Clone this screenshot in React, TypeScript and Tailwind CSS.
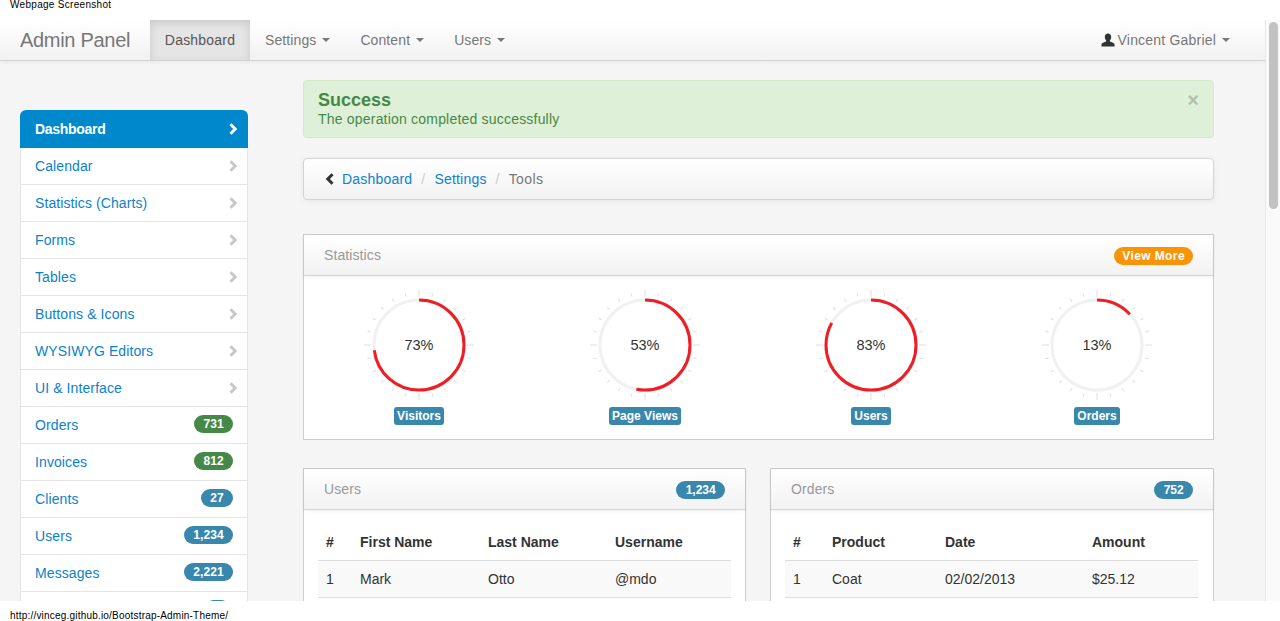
import React from "react";

const sideItems = [
  { label: "Calendar" },
  { label: "Statistics (Charts)" },
  { label: "Forms" },
  { label: "Tables" },
  { label: "Buttons & Icons" },
  { label: "WYSIWYG Editors" },
  { label: "UI & Interface" },
  { label: "Orders", badge: "731", green: true },
  { label: "Invoices", badge: "812", green: true },
  { label: "Clients", badge: "27" },
  { label: "Users", badge: "1,234" },
  { label: "Messages", badge: "2,221" },
];

const gauges = [
  { value: 73, label: "Visitors" },
  { value: 53, label: "Page Views" },
  { value: 83, label: "Users" },
  { value: 13, label: "Orders" },
];

const Caret = () => (
  <span className="ml-[6px] inline-block h-0 w-0 border-x-[4px] border-t-[4px] border-x-transparent border-t-[#777] align-middle" />
);

const Chevron = ({ color, left }: { color: string; left?: boolean }) => (
  <svg width="10" height="12" viewBox="0 0 10 12" className="shrink-0">
    <path
      d={left ? "M7.5 1.2 L2.8 6 L7.5 10.8" : "M2.5 1.2 L7.2 6 L2.5 10.8"}
      fill="none"
      stroke={color}
      strokeWidth="3"
    />
  </svg>
);

const Badge = ({ text, bg, margin }: { text: string; bg: string; margin: string }) => (
  <span
    className={`flex h-[18px] items-center rounded-[9px] px-[9.3px] text-[12px] font-bold text-white ${bg} ${margin}`}
  >
    {text}
  </span>
);

const Gauge = ({ value, label }: { value: number; label: string }) => {
  const r = 45;
  const c = 2 * Math.PI * r;
  const ticks = Array.from({ length: 24 }, (_, i) => i);
  return (
    <div className="flex flex-col items-center">
      <svg width="110" height="110" viewBox="0 0 110 110">
        {ticks.map((i) => (
          <line
            key={i}
            x1="55"
            y1={i % 6 === 0 ? 0 : 1.5}
            x2="55"
            y2={i % 6 === 0 ? 7 : 5}
            transform={`rotate(${i * 15} 55 55)`}
            stroke="#dedede"
            strokeWidth="1"
          />
        ))}
        <circle cx="55" cy="55" r={r} fill="none" stroke="#f1f1f1" strokeWidth="3" />
        <circle
          cx="55"
          cy="55"
          r={r}
          fill="none"
          stroke="#ef1e25"
          strokeWidth="3"
          strokeDasharray={`${(c * value) / 100} ${c}`}
          transform="rotate(-90 55 55)"
        />
        <text x="55" y="60" textAnchor="middle" fontSize="14.5" fill="#333">
          {value}%
        </text>
      </svg>
      <span className="mt-[7px] flex h-[18px] items-center rounded-[3px] bg-[#3a87ad] px-[3.5px] text-[12px] font-bold text-white">
        {label}
      </span>
    </div>
  );
};

const PanelHeader = ({ title, children }: { title: string; children: React.ReactNode }) => (
  <div className="flex h-[41px] items-center justify-between border-b border-[#d4d4d4] bg-gradient-to-b from-white to-[#f2f2f2] px-[20px] shadow-[0_1px_4px_rgba(0,0,0,0.065)]">
    <span className="text-[14px] tracking-[0.1px] text-[#999]">{title}</span>
    {children}
  </div>
);

const DataTable = ({
  widths,
  head,
  row,
}: {
  widths: string[];
  head: string[];
  row: string[];
}) => (
  <table className="mx-[14px] mt-[13px] table-fixed border-collapse text-[14px] text-[#333]">
    <colgroup>
      {widths.map((w, i) => (
        <col key={i} style={{ width: w }} />
      ))}
    </colgroup>
    <thead>
      <tr className="h-[37px] border-b border-[#ddd]">
        {head.map((h) => (
          <th key={h} className="px-[8px] pt-[2px] text-left font-bold">
            {h}
          </th>
        ))}
      </tr>
    </thead>
    <tbody>
      <tr className="h-[37px] border-b border-[#ddd] bg-[#f9f9f9]">
        {row.map((c) => (
          <td key={c} className="px-[8px] pt-[2px]">
            {c}
          </td>
        ))}
      </tr>
      <tr className="h-[37px]">
        {row.map((c) => (
          <td key={c} className="px-[8px]" />
        ))}
      </tr>
    </tbody>
  </table>
);

export default function App() {
  return (
    <div className="flex h-[621px] w-[1280px] flex-col overflow-hidden bg-white font-['Liberation_Sans',Arial,sans-serif] text-[14px]">
      <div className="h-[20px] shrink-0 pl-[10px] text-[10px] leading-[9px] tracking-[0.3px] text-black">
        Webpage Screenshot
      </div>

      <div className="flex h-[581px] shrink-0">
        <div className="flex w-[1265px] flex-col overflow-hidden bg-[#f5f5f5]">
          <nav className="flex h-[41px] shrink-0 items-center border-b border-[#d4d4d4] bg-gradient-to-b from-white to-[#f2f2f2] pl-[20px] pr-[35px] tracking-[0.1px] shadow-[0_1px_4px_rgba(0,0,0,0.065)]">
            <span className="w-[130px] text-[20px] tracking-[-0.3px] text-[#777]">Admin Panel</span>
            <span className="flex h-[40px] w-[100px] items-center justify-center bg-[#e5e5e5] tracking-[0.2px] text-[#555] shadow-[inset_0_3px_8px_rgba(0,0,0,0.125)]">
              Dashboard
            </span>
            <span className="flex h-[40px] items-center px-[15px] text-[#777]">
              Settings
              <Caret />
            </span>
            <span className="flex h-[40px] items-center px-[15px] text-[#777]">
              Content
              <Caret />
            </span>
            <span className="flex h-[40px] items-center px-[15px] text-[#777]">
              Users
              <Caret />
            </span>
            <span className="ml-auto flex items-center tracking-[0.2px] text-[#777]">
              <svg width="14" height="14" viewBox="0 0 14 14" className="mr-[3px]">
                <path
                  d="M7 .5c2 0 3.2 1.500 3.200 3.400 0 1.400-.6 2.700-1.300 3.400v1.300c1.500.6 4 1.300 4.600 2.400v2.500H.5V11c.6-1.100 3.100-1.800 4.600-2.400V7.300C4.400 6.600 3.800 5.300 3.800 3.900 3.800 2 5 .5 7 .5z"
                  fill="#333"
                />
              </svg>
              Vincent Gabriel
              <Caret />
            </span>
          </nav>

          <div className="flex min-h-0 grow pl-[20px]">
            <ul className="mt-[49px] w-[228px] shrink-0 self-start">
              <li className="flex h-[38px] items-center justify-between rounded-t-[6px] bg-[#0088cc] pl-[15px] pr-[10px] font-bold tracking-[-0.3px] text-white">
                Dashboard
                <Chevron color="#fff" />
              </li>
              {sideItems.map((item) => (
                <li
                  key={item.label}
                  className="flex h-[37px] items-center justify-between border-x border-b border-[#e5e5e5] bg-white px-[14px] tracking-[0.1px] text-[#0a82cc]"
                >
                  {item.label}
                  {item.badge ? (
                    <Badge
                      text={item.badge}
                      bg={item.green ? "bg-[#468847]" : "bg-[#3a87ad]"}
                      margin="-mt-[2px]"
                    />
                  ) : (
                    <span className="-mr-[5px]">
                      <Chevron color="#c8c8c8" />
                    </span>
                  )}
                </li>
              ))}
              <li className="flex h-[37px] items-center justify-end border-x border-b border-[#e5e5e5] bg-white px-[17px]">
                <span className="-mt-[2px] h-[18px] w-[25px] rounded-[9px] bg-[#3a87ad]" />
              </li>
            </ul>

            <main className="ml-[55px] w-[911px] shrink-0 pt-[19px]">
              <div className="flex h-[58px] justify-between rounded-[4px] border border-[#d6e9c6] bg-[#dff0d8] px-[14px] pt-[9px] text-[#468847]">
                <div>
                  <h4 className="text-[18px] leading-[20px] font-bold">Success</h4>
                  <p className="leading-[18px] tracking-[0.2px]">The operation completed successfully</p>
                </div>
                <span className="text-[20px] leading-[20px] font-bold text-black opacity-20">×</span>
              </div>

              <div className="mt-[20px] flex h-[42px] items-center rounded-[4px] border border-[#d4d4d4] bg-gradient-to-b from-white to-[#f2f2f2] pl-[21px] tracking-[0.2px] shadow-[0_1px_4px_rgba(0,0,0,0.065)]">
                <span className="mr-[7px]">
                  <Chevron color="#333" left />
                </span>
                <span className="text-[#0a82cc]">Dashboard</span>
                <span className="px-[9px] text-[#ccc]">/</span>
                <span className="text-[#0a82cc]">Settings</span>
                <span className="px-[9px] text-[#ccc]">/</span>
                <span className="tracking-[0.4px] text-[#777]">Tools</span>
              </div>

              <section className="mt-[34px] h-[206px] border border-[#ccc] bg-white">
                <PanelHeader title="Statistics">
                  <span className="mt-[2px] flex h-[18px] items-center rounded-[9px] bg-[#f89406] px-[8px] text-[12px] font-bold tracking-[0.4px] text-white">
                    View More
                  </span>
                </PanelHeader>
                <div className="ml-[2px] mt-[14px] grid w-[904px] grid-cols-4">
                  {gauges.map((g) => (
                    <Gauge key={g.label} value={g.value} label={g.label} />
                  ))}
                </div>
              </section>

              <div className="mt-[28px] flex justify-between">
                <section className="w-[443px] border border-[#ccc] bg-white">
                  <PanelHeader title="Users">
                    <Badge text="1,234" bg="bg-[#3a87ad]" margin="mt-[2px]" />
                  </PanelHeader>
                  <DataTable
                    widths={["34px", "128px", "127px", "124px"]}
                    head={["#", "First Name", "Last Name", "Username"]}
                    row={["1", "Mark", "Otto", "@mdo"]}
                  />
                </section>
                <section className="w-[444px] border border-[#ccc] bg-white">
                  <PanelHeader title="Orders">
                    <Badge text="752" bg="bg-[#3a87ad]" margin="mt-[2px]" />
                  </PanelHeader>
                  <DataTable
                    widths={["39px", "113px", "147px", "114px"]}
                    head={["#", "Product", "Date", "Amount"]}
                    row={["1", "Coat", "02/02/2013", "$25.12"]}
                  />
                </section>
              </div>
            </main>
          </div>
        </div>

        <div className="w-[15px] shrink-0 border-l border-[#e8e8e8] bg-[#fafafa] pl-[3px] pt-[2px]">
          <div className="h-[187px] w-[9px] rounded-[5px] bg-[#c2c2c2]" />
        </div>
      </div>

      <div className="h-[20px] shrink-0 pl-[10px] pt-[10px] text-[10px] leading-[10px] tracking-[0.2px] text-black">
        http://vinceg.github.io/Bootstrap-Admin-Theme/
      </div>
    </div>
  );
}
